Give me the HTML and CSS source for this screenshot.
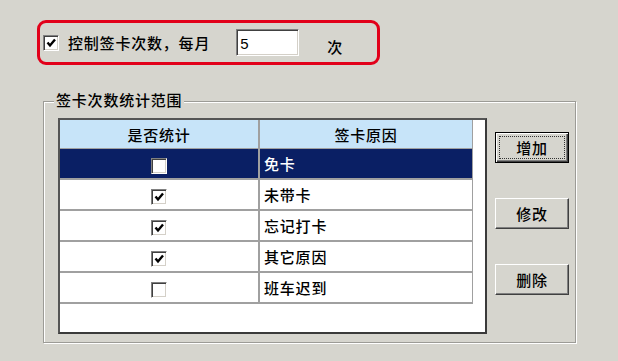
FILE: index.html
```html
<!DOCTYPE html>
<html lang="zh-CN">
<head>
    <meta charset="UTF-8">
    <title>签卡次数设置</title>
    <link rel="stylesheet" href="styles.css">
</head>
<body>
    <div class="page">
        <!-- 每月签卡次数限制 -->
        <div class="limit-box">
            <label class="check-label">
                <span class="chk"><svg viewBox="0 0 12 12"><path d="M2.5 5.5 L5 8.5 L10 2.5"/></svg></span>
                <span class="label-text">控制签卡次数，每月</span>
            </label>
            <input class="num-input" type="text" value="5">
            <span class="unit">次</span>
        </div>

        <!-- 统计范围 -->
        <div class="group">
            <span class="group-title">签卡次数统计范围</span>
            <div class="list-box">
                <table class="grid">
                    <thead>
                        <tr><th class="col-check">是否统计</th><th>签卡原因</th></tr>
                    </thead>
                    <tbody>
                        <tr class="selected">
                            <td class="col-check"><span class="chk"></span></td>
                            <td class="reason">免卡</td>
                        </tr>
                        <tr>
                            <td class="col-check"><span class="chk"><svg viewBox="0 0 12 12"><path d="M2.5 5.5 L5 8.5 L10 2.5"/></svg></span></td>
                            <td class="reason">未带卡</td>
                        </tr>
                        <tr>
                            <td class="col-check"><span class="chk"><svg viewBox="0 0 12 12"><path d="M2.5 5.5 L5 8.5 L10 2.5"/></svg></span></td>
                            <td class="reason">忘记打卡</td>
                        </tr>
                        <tr>
                            <td class="col-check"><span class="chk"><svg viewBox="0 0 12 12"><path d="M2.5 5.5 L5 8.5 L10 2.5"/></svg></span></td>
                            <td class="reason">其它原因</td>
                        </tr>
                        <tr>
                            <td class="col-check"><span class="chk"></span></td>
                            <td class="reason">班车迟到</td>
                        </tr>
                    </tbody>
                </table>
            </div>
            <div class="btns">
                <button class="btn default"><span class="focus">增加</span></button>
                <button class="btn">修改</button>
                <button class="btn">删除</button>
            </div>
        </div>
    </div>
</body>
</html>
```

FILE: styles.css
```css
body {
    margin: 0;
    background: #d6d5ce;
    font-family: "Noto Sans CJK SC", "DejaVu Sans", sans-serif;
    font-size: 15px;
    font-weight: 500;
    color: #000;
}
.page {
    width: 618px;
    height: 361px;
    padding: 20px 0 0 37px;
    box-sizing: border-box;
}
.limit-box {
    width: 343px;
    height: 45px;
    box-sizing: border-box;
    border: 3px solid #e2001a;
    border-radius: 9px;
    display: flex;
    align-items: center;
    padding-left: 3px;
}
.check-label {
    display: flex;
    align-items: center;
}
.label-text {
    margin-left: 9px;
    letter-spacing: 0.8px;
    line-height: 18px;
}
.chk {
    display: inline-block;
    width: 16px;
    height: 16px;
    box-sizing: border-box;
    background: #fff;
    border-top: 1px solid #808080;
    border-left: 1px solid #808080;
    border-right: 1px solid #fff;
    border-bottom: 1px solid #fff;
    box-shadow: inset 1px 1px 0 #404040, inset -1px -1px 0 #d4d0c8;
    vertical-align: middle;
}
.chk svg {
    display: block;
    width: 12px;
    height: 12px;
    margin: 1px 0 0 1px;
}
.chk path {
    fill: none;
    stroke: #000;
    stroke-width: 2.4;
}
.num-input {
    margin-left: 26px;
    width: 63px;
    height: 27px;
    box-sizing: border-box;
    padding: 2px 3px 0;
    font-family: "Liberation Sans", sans-serif;
    font-size: 15px;
    background: #fff;
    border-top: 1px solid #808080;
    border-left: 1px solid #808080;
    border-right: 1px solid #fff;
    border-bottom: 1px solid #fff;
    box-shadow: inset 1px 1px 0 #404040, inset -1px -1px 0 #d4d0c8;
    outline: none;
}
.unit {
    margin-left: 28px;
    margin-top: 7px;
}

/* group box */
.group {
    position: relative;
    margin: 36px 0 0 6px;
    width: 533px;
    height: 242px;
    box-sizing: border-box;
    border: 1px solid #9c9b96;
    box-shadow: inset 1px 1px 0 #fff, 1px 1px 0 #fff;
    padding: 16px 0 0 14px;
    display: flex;
}
.group-title {
    position: absolute;
    left: 10px;
    top: -11px;
    padding: 0 2px;
    background: #d6d5ce;
    letter-spacing: 0.8px;
    line-height: 18px;
}
.list-box {
    width: 429px;
    height: 216px;
    box-sizing: border-box;
    background: #fff;
    border: 2px solid #3a3a3a;
    border-top-color: #555;
    border-left-color: #555;
}
.grid {
    width: 413px;
    border-collapse: collapse;
    border-right: 1px solid #a0a0a0;
}
.grid th {
    height: 28px;
    padding: 0;
    background: #c7e4f9;
    font-weight: 500;
    letter-spacing: 0.8px;
    border-right: 2px solid #a0a0a0;
    border-bottom: 1px solid #a0a0a0;
}
.grid th:last-child {
    border-right: none;
}
.grid td {
    height: 29px;
    padding: 0;
    border-bottom: 2px solid #a0a0a0;
    border-right: 2px solid #a0a0a0;
}
.grid td:last-child {
    border-right: none;
}
.col-check {
    width: 198px;
    text-align: center;
}
.reason {
    padding-left: 4px !important;
    letter-spacing: 0.8px;
}
.grid tr.selected td {
    background: #0a1f64;
    color: #fff;
}
.selected .chk {
    background: #fff;
}

/* buttons */
.btns {
    margin-left: 8px;
    padding-top: 14px;
    display: flex;
    flex-direction: column;
}
.btn {
    width: 74px;
    height: 31px;
    box-sizing: border-box;
    padding: 0;
    font-family: inherit;
    font-size: 15px;
    font-weight: 500;
    letter-spacing: 0.8px;
    color: #000;
    background: #d6d5ce;
    border: 1px solid;
    border-color: #fff #404040 #404040 #fff;
    box-shadow: inset -1px -1px 0 #808080;
    margin-bottom: 35px;
}
.btn.default {
    border: 1px solid #000;
    box-shadow: inset 1px 1px 0 #fff, inset -1px -1px 0 #404040, inset -2px -2px 0 #808080;
    padding: 3px;
}
.btn .focus {
    display: flex;
    align-items: center;
    justify-content: center;
    height: 100%;
    border: 1px dotted #333;
    box-sizing: border-box;
}
```
